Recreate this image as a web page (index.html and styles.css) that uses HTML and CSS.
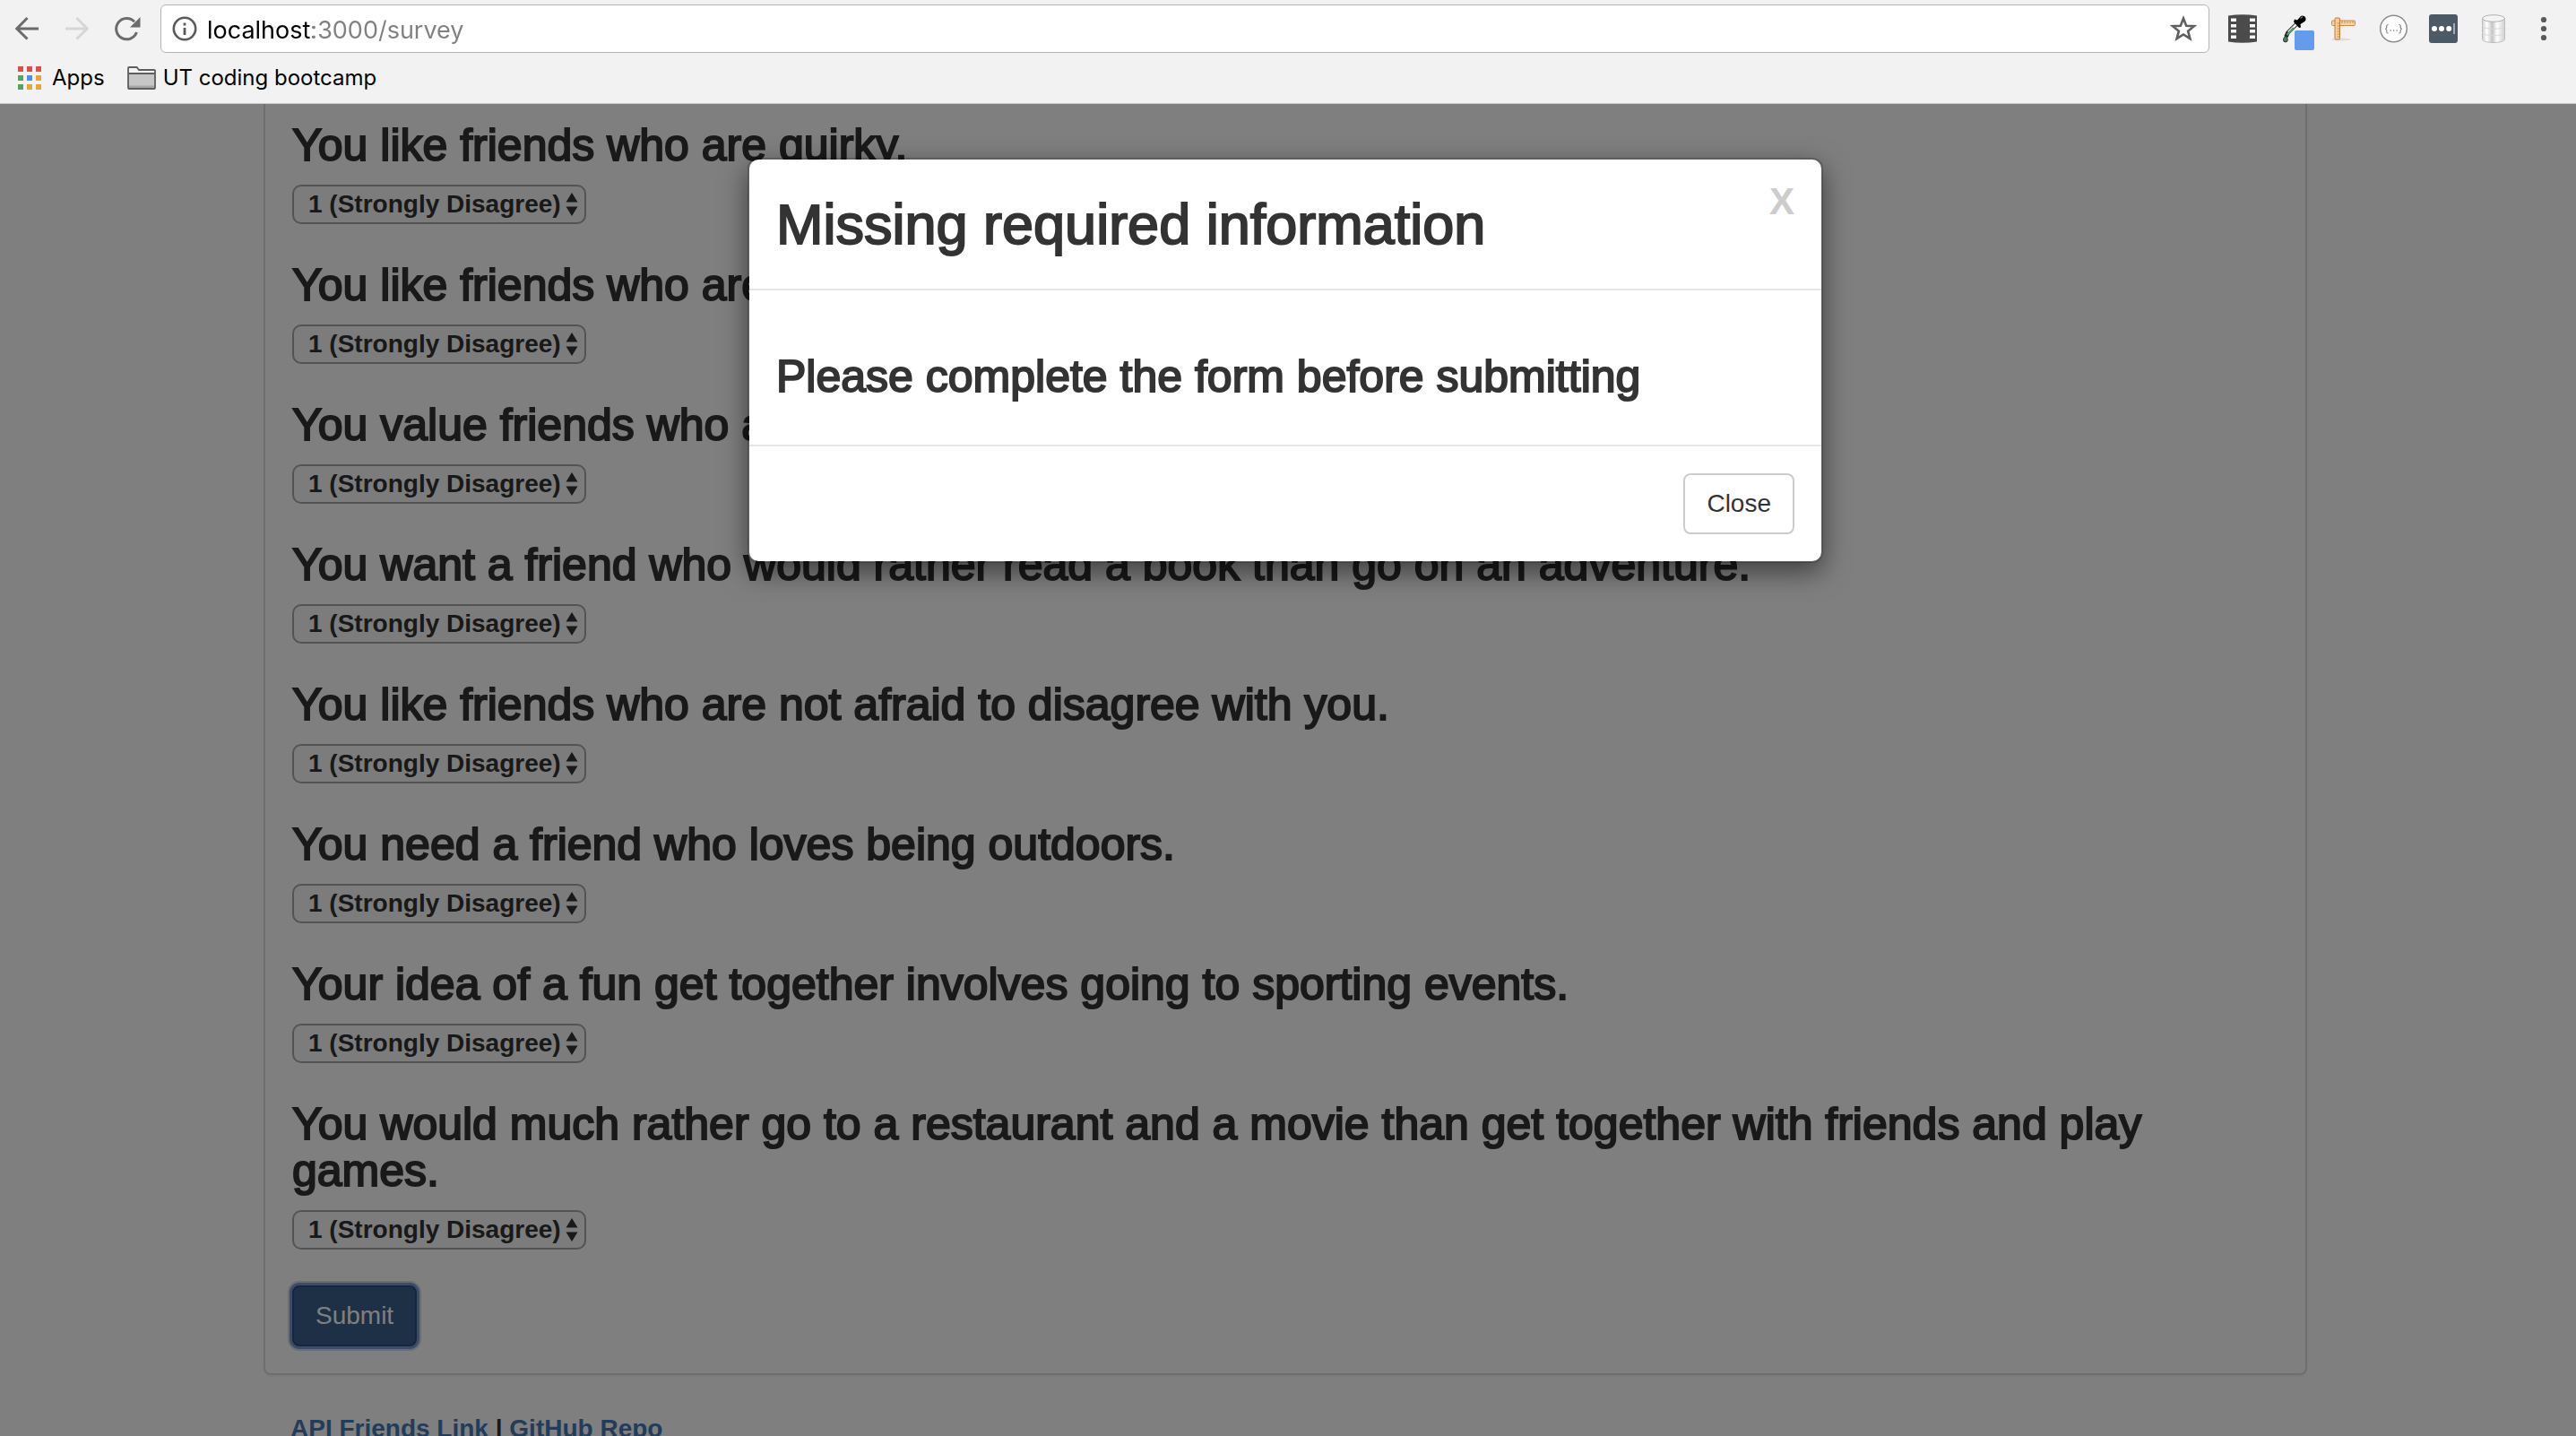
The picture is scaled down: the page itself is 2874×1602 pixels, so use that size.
FILE: index.html
```html
<!DOCTYPE html>
<html lang="en">
<head>
<meta charset="utf-8">
<title>Friend Finder Survey</title>
<link rel="stylesheet" href="styles.css">
</head>
<body>
<svg width="0" height="0" class="sprite" aria-hidden="true">
  <symbol id="arrows" viewBox="0 0 14 26"><path d="M7 0L13.500 10.500H.5zM7 26L.5 15.500H13.500z" fill="#333"/></symbol>
</svg>

<header class="browser">
  <div class="toolbar">
    <nav class="group" aria-label="History">
      <button class="icon" aria-label="Back"><svg viewBox="0 0 32 32"><path d="M29 17.500H5M16.500 5.500L4.800 17.500l11.700 11.500" transform="translate(0 -1.500)" fill="none" stroke="#6b6b6b" stroke-width="3"/></svg></button>
      <button class="icon" aria-label="Forward" disabled><svg viewBox="0 0 32 32"><path d="M3 16h24M15.500 4l11.700 12-11.700 11.500" fill="none" stroke="#d6d6d6" stroke-width="3"/></svg></button>
      <button class="icon" aria-label="Reload"><svg viewBox="0 0 32 32"><path d="M26.400 20A11.700 11.700 0 1 1 24 8.200" fill="none" stroke="#6b6b6b" stroke-width="3"/><path d="M30.500 3v11.500H19z" fill="#6b6b6b"/></svg></button>
    </nav>
    <div class="address">
      <svg class="info" viewBox="0 0 28 28"><circle cx="14" cy="14" r="12.200" fill="none" stroke="#5a5a5a" stroke-width="2.600"/><path d="M14 7.500v3M14 13v8" stroke="#5a5a5a" stroke-width="2.800"/></svg>
      <input class="url" type="text" value="localhost:3000/survey" aria-label="Address">
      <button class="icon" aria-label="Bookmark this page"><svg viewBox="0 0 32 32"><path d="M16 4.500l3.200 8.200 8.700.5-6.800 5.500 2.300 8.500L16 22.500l-7.400 4.700 2.300-8.500-6.800-5.500 8.700-.5z" fill="none" stroke="#606060" stroke-width="2.600"/></svg></button>
    </div>
    <div class="group">
      <button class="icon" aria-label="Film extension"><svg viewBox="0 0 32 32"><path d="M0 1.500Q16-1 32 1.500v29Q16 33 0 30.500z" fill="#4b4b4b"/><path d="M3 4.500h6v3.500H3zM3 11h6v3.500H3zM3 17h6v3.500H3zM3 23.500h6V27H3zM24 4.500h6v3.500h-6zM24 11h6v3.500h-6zM24 17h6v3.500h-6zM24 23.500h6V27h-6z" fill="#fff"/></svg></button>
      <button class="icon" aria-label="Color picker"><svg viewBox="0 0 32 32"><path d="M22 9L10.500 20.500 8.500 25" fill="none" stroke="#222" stroke-width="4.500"/><path d="M22 9L11 20" stroke="#f2f2f2" stroke-width="2.500"/><path d="M17 15l-7.500 8" stroke="#58a060" stroke-width="2.500"/><path d="M8 23.500c-2 3-2.500 4-2.500 5a2.400 2.400 0 0 0 4.800 0c0-1.500-1-3-2.300-5z" fill="#3f8a4e" stroke="#222"/><path d="M18 5.500l3 1 4-4.500c2-1.500 5 0 5.500 2.500.3 2-.5 3-2 4L24.500 11l.5 3.500-2 .5-6-6.500z" fill="#000"/><path d="M24.500 4.500l2.500-2" stroke="#777" stroke-width="1.500"/><rect x="18" y="18" width="22" height="22" rx="2" fill="#639cee"/></svg></button>
      <button class="icon" aria-label="Page ruler"><svg viewBox="0 0 32 32"><ellipse cx="14" cy="28" rx="11" ry="1.500" fill="#ddd"/><rect x="3.500" y="7" width="26" height="5.500" rx="1" fill="#f6d3a3" stroke="#c98b4f"/><rect x="7" y="4" width="5.500" height="24" rx="1" fill="#f6cf9a" stroke="#c07c3e"/><path d="M15 7.500v2.500M18 7.500v2.500M21 7.500v2.500M24 7.500v2.500M27 7.500v2.500M9.500 10H12M9.500 13H12M9.500 16H12M9.500 19H12M9.500 22H12M9.500 25H12" stroke="#c98b4f"/></svg></button>
      <button class="icon" aria-label="JSON viewer"><svg viewBox="0 0 32 32"><circle cx="16.500" cy="16" r="14.800" fill="#fff" stroke="#8c8c8c" stroke-width="1.500"/><path d="M10.500 11.500c-2 0-1.700 1-1.700 2.500s-.3 2-1.500 2.200c1.200.2 1.500.8 1.500 2.300s-.3 2.500 1.700 2.500M22.500 11.500c2 0 1.700 1 1.700 2.500s.3 2 1.500 2.200c-1.200.2-1.500.8-1.500 2.300s.3 2.500-1.700 2.500" fill="none" stroke="#666"/><path d="M12.500 18h1.300M16 18h1.300M19.500 18h1.300" stroke="#888" stroke-width="1.300"/></svg></button>
      <button class="icon" aria-label="Password manager"><svg viewBox="0 0 32 32"><rect width="32" height="32" rx="3" fill="#4c5a65"/><circle cx="6" cy="16" r="3" fill="#fff"/><circle cx="14" cy="16" r="3" fill="#fff"/><circle cx="22.200" cy="16" r="3" fill="#fff"/><path d="M28 10v12" stroke="#c5cacd" stroke-width="1.500"/></svg></button>
      <button class="icon" aria-label="Database viewer"><svg viewBox="0 0 32 32"><defs><linearGradient id="metal"><stop offset="0" stop-color="#d0d0d0"/><stop offset=".2" stop-color="#fff"/><stop offset=".45" stop-color="#c4c4c4"/><stop offset=".65" stop-color="#fff"/><stop offset="1" stop-color="#cfcfcf"/></linearGradient></defs><path d="M3.500 4.500v23c0 5.300 25 5.300 25 0v-23z" fill="url(#metal)" stroke="#bdbdbd"/><ellipse cx="16" cy="4.500" rx="12.300" ry="3.800" fill="#f4f4f4" stroke="#b0b0b0"/><path d="M3.500 12.500c0 5 25 5 25 0M3.500 20c0 5 25 5 25 0" fill="none" stroke="#d8d8d8"/></svg></button>
      <button class="icon" aria-label="Menu"><svg viewBox="0 0 32 32"><g fill="#5a5a5a"><circle cx="16" cy="6" r="3.100"/><circle cx="16" cy="16" r="3.100"/><circle cx="16" cy="26" r="3.100"/></g></svg></button>
    </div>
  </div>
  <nav class="bookmarks" aria-label="Bookmarks">
    <a class="bookmark" href="#apps"><svg width="26" height="26" viewBox="0 0 26 26"><path d="M0 0h6v6H0zM10 0h6v6h-6zM20 0h6v6h-6z" fill="#de4f43"/><path d="M0 10h6v6H0zM0 20h6v6H0z" fill="#57a164"/><path d="M10 10h6v6h-6z" fill="#4a90f0"/><path d="M20 10h6v6h-6zM10 20h6v6h-6zM20 20h6v6h-6z" fill="#e3a73b"/></svg>Apps</a>
    <a class="bookmark bookmark-folder" href="#bootcamp"><svg width="32" height="26" viewBox="0 0 32 26"><path d="M1 7.500V2q0-1 1-1h8q1 0 1.500 1l1.500 2H30q1 0 1 1v2.500z" fill="#f4f4f4"/><path d="M1 8h30v16H1z" fill="#c6c6c6"/><path d="M1 21.500h30V24H1z" fill="#a6a6a6"/><path d="M1 8h30M1 24V2q0-1 1-1h8q1 0 1.500 1l1.500 2H30q1 0 1 1v19q0 1-1 1H2q-1 0-1-1z" fill="none" stroke="#5e5e5e" stroke-width="1.800"/></svg>UT coding bootcamp</a>
  </nav>
</header>

<div class="viewport">
  <main class="container">
    <form class="panel">
      <h3 class="question"><label for="q1">You like friends who are quirky.</label></h3>
      <div class="choice"><select id="q1"><option>1 (Strongly Disagree)</option></select><svg><use href="#arrows"/></svg></div>
      <h3 class="question"><label for="q2">You like friends who are talkative.</label></h3>
      <div class="choice"><select id="q2"><option>1 (Strongly Disagree)</option></select><svg><use href="#arrows"/></svg></div>
      <h3 class="question"><label for="q3">You value friends who are honest.</label></h3>
      <div class="choice"><select id="q3"><option>1 (Strongly Disagree)</option></select><svg><use href="#arrows"/></svg></div>
      <h3 class="question"><label for="q4">You want a friend who would rather read a book than go on an adventure.</label></h3>
      <div class="choice"><select id="q4"><option>1 (Strongly Disagree)</option></select><svg><use href="#arrows"/></svg></div>
      <h3 class="question"><label for="q5">You like friends who are not afraid to disagree with you.</label></h3>
      <div class="choice"><select id="q5"><option>1 (Strongly Disagree)</option></select><svg><use href="#arrows"/></svg></div>
      <h3 class="question"><label for="q6">You need a friend who loves being outdoors.</label></h3>
      <div class="choice"><select id="q6"><option>1 (Strongly Disagree)</option></select><svg><use href="#arrows"/></svg></div>
      <h3 class="question"><label for="q7">Your idea of a fun get together involves going to sporting events.</label></h3>
      <div class="choice"><select id="q7"><option>1 (Strongly Disagree)</option></select><svg><use href="#arrows"/></svg></div>
      <h3 class="question"><label for="q8">You would much rather go to a restaurant and a movie than get together with friends and play games.</label></h3>
      <div class="choice"><select id="q8"><option>1 (Strongly Disagree)</option></select><svg><use href="#arrows"/></svg></div>
      <button class="btn btn-primary" type="button">Submit</button>
    </form>
    <footer class="links"><a href="#api">API Friends Link</a> | <a href="#github">GitHub Repo</a></footer>
  </main>

  <div class="backdrop">
    <section class="modal" role="dialog" aria-modal="true" aria-labelledby="modal-title">
      <div class="modal-header">
        <h2 id="modal-title">Missing required information</h2>
        <button class="dismiss" type="button" aria-label="Dismiss">X</button>
      </div>
      <div class="modal-body"><h3>Please complete the form before submitting</h3></div>
      <div class="modal-footer"><button class="btn btn-default" type="button">Close</button></div>
    </section>
  </div>
</div>
</body>
</html>
```

FILE: styles.css
```css
* { box-sizing: border-box; }

body {
  margin: 0;
  height: 100vh;
  display: flex;
  flex-direction: column;
  overflow: hidden;
  background: #fff;
  color: #333;
  font: 28px/40px "Liberation Sans", Arial, sans-serif;
}

/* The stroke gives the regular face a medium weight */
h2, h3 { margin: 0; font-weight: 500; -webkit-text-stroke: 2px currentColor; }
h3 { font-size: 50px; line-height: 52px; }
button, input, select { font: inherit; color: inherit; margin: 0; }
.sprite { position: absolute; }

/* Browser chrome */
.browser {
  flex: none;
  background: #f2f2f2;
  border-bottom: 1px solid #c8c8c8;
  color: #000;
  font-family: Inter, Roboto, sans-serif;
}
.toolbar { display: flex; align-items: center; gap: 21px; padding: 5px 20px 0 14px; }
.group { display: flex; gap: 24px; }
.icon { display: block; flex: none; width: 32px; height: 32px; padding: 0; border: 0; background: none; }
.icon svg { display: block; width: 32px; height: 32px; overflow: visible; }
.address {
  flex: 1;
  display: flex;
  align-items: center;
  height: 54px;
  padding: 0 12px;
  border: 1px solid #b5b5b5;
  border-radius: 6px;
  background: #fff;
}
.info { width: 28px; height: 28px; margin-right: 11px; }
.url {
  flex: 1;
  min-width: 0;
  height: 42px;
  padding: 2px 0 0;
  border: 0;
  outline: 0;
  font-size: 27px;
  background: linear-gradient(90deg, #000 118px, #808080 118px);
  -webkit-background-clip: text;
  background-clip: text;
  -webkit-text-fill-color: transparent;
}
.bookmarks { display: flex; gap: 25px; padding: 8px 20px; font-size: 24px; }
.bookmark { display: flex; align-items: center; gap: 12px; color: #000; text-decoration: none; }
.bookmark-folder { gap: 8px; }

/* Survey */
.viewport { position: relative; flex: 1; min-height: 0; overflow: hidden; padding-right: 6px; }
.container { max-width: 2280px; margin: 0 auto; }
.panel {
  padding: 20px 30px 30px;
  border: 2px solid #ddd;
  border-top: 0;
  border-radius: 0 0 8px 8px;
  box-shadow: 0 2px 2px rgba(0, 0, 0, .05);
}
.question { margin-bottom: 18px; }
.choice { display: grid; width: 328px; margin-bottom: 42px; }
.choice select {
  grid-area: 1 / 1;
  appearance: none;
  height: 44px;
  padding: 0 16px;
  border: 2px solid #a6a6a6;
  border-radius: 10px;
  background: #f8f8f8;
  font-weight: bold;
}
.choice svg { grid-area: 1 / 1; place-self: center end; width: 14px; height: 26px; margin-right: 9px; pointer-events: none; }
.choice:has(+ .btn) { margin-bottom: 40px; }

.btn { display: block; padding: 12px 24px; border: 2px solid; border-radius: 8px; }
.btn-primary {
  background: #3a608a;
  border-color: #2c4c78;
  color: #fff;
  box-shadow: inset 0 0 0 3px #3c5f94, 0 0 0 3px #7898cc, 0 0 0 5px #d0daec;
}
.btn-default { background: #fff; border-color: #ccc; }

.links { padding: 40px 30px; font-weight: bold; }
.links a { color: #457ab5; text-decoration: none; }

/* Modal */
.backdrop {
  position: absolute;
  inset: 0;
  display: flex;
  justify-content: center;
  align-items: flex-start;
  padding: 60px 6px 0 0;
  background: rgba(0, 0, 0, .5);
}
.modal {
  width: 100%;
  max-width: 1200px;
  border: 2px solid rgba(0, 0, 0, .2);
  border-radius: 12px;
  background: #fff;
  background-clip: padding-box;
  box-shadow: 0 10px 30px rgba(0, 0, 0, .5);
}
.modal-header { display: flex; justify-content: space-between; align-items: flex-start; padding: 30px; border-bottom: 2px solid #e5e5e5; }
.modal-header h2 { font-size: 63px; line-height: 84px; }
.dismiss { padding: 0; border: 0; background: none; color: #ccc; font-size: 42px; line-height: 42px; font-weight: bold; margin-top: -4px; }
.modal-body { padding: 70px 30px 50px; }
.modal-footer { display: flex; justify-content: flex-end; padding: 30px; border-top: 2px solid #e5e5e5; }
```
